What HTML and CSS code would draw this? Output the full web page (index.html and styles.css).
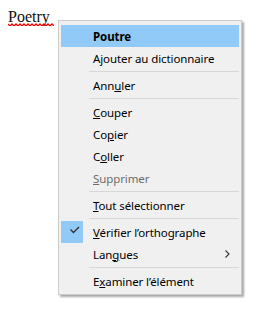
FILE: index.html
```html
<!DOCTYPE html>
<html>
<head>
<meta charset="utf-8">
<link rel="stylesheet" href="styles.css">
</head>
<body>
<span class="word">Poetry<svg class="squiggle" width="46" height="4" viewBox="0 0 46 4"><polyline points="0,1 2,3 4,1 6,3 8,1 10,3 12,1 14,3 16,1 18,3 20,1 22,3 24,1 26,3 28,1 30,3 32,1 34,3 36,1 38,3 40,1 42,3 44,1 46,3" fill="none" stroke="#ff0000" stroke-width="1.3"/></svg></span>
<div class="menu">
  <div class="item hl"><span class="chk"></span><span class="label bold">Poutre</span></div>
  <div class="item"><span class="chk"></span><span class="label">Ajouter au dictionnaire</span></div>
  <div class="sep"></div>
  <div class="item"><span class="chk"></span><span class="label">Ann<u>u</u>ler</span></div>
  <div class="sep"></div>
  <div class="item"><span class="chk"></span><span class="label"><u>C</u>ouper</span></div>
  <div class="item"><span class="chk"></span><span class="label">Co<u>p</u>ier</span></div>
  <div class="item"><span class="chk"></span><span class="label">C<u>o</u>ller</span></div>
  <div class="item disabled"><span class="chk"></span><span class="label"><u>S</u>upprimer</span></div>
  <div class="sep"></div>
  <div class="item"><span class="chk"></span><span class="label"><u>T</u>out sélectionner</span></div>
  <div class="sep"></div>
  <div class="item"><span class="chk on"><svg width="22" height="22" viewBox="0 0 22 22"><path d="M9.5 8.5 L12.5 11.5 L18 6" fill="none" stroke="#333" stroke-width="1.4"/></svg></span><span class="label"><u>V</u>érifier l’orthographe</span></div>
  <div class="item"><span class="chk"></span><span class="label">Lan<u>g</u>ues</span><svg class="arrow" width="5" height="8" viewBox="0 0 5 8"><path d="M0.5 0.5 L4 4 L0.5 7.5" fill="none" stroke="#333" stroke-width="1.1"/></svg></div>
  <div class="sep"></div>
  <div class="item"><span class="chk"></span><span class="label">E<u>x</u>aminer l’élément</span></div>
</div>
</body>
</html>
```

FILE: styles.css
```css
body {
  margin: 8px;
  font-family: "Liberation Serif", serif;
  font-size: 16px;
  background: #fff;
}
.word {
  position: relative;
  color: #111;
}
.squiggle {
  position: absolute;
  left: 0;
  top: 15px;
  display: block;
}
.menu {
  position: absolute;
  left: 58px;
  top: 20px;
  width: 178px;
  padding: 4px 2px 2px 2px;
  background: #f0f0f0;
  border: 1px solid #cccccc;
  box-shadow: 2px 2px 2px rgba(0, 0, 0, 0.35);
  font-family: "Noto Sans", sans-serif;
  font-size: 11.5px;
  letter-spacing: -0.1px;
  color: #000;
}
.item {
  height: 22px;
  display: flex;
  align-items: center;
}
.item.hl {
  background: #91c9f7;
}
.chk {
  width: 22px;
  height: 22px;
  flex: none;
  margin-right: 10px;
}
.chk.on {
  background: #91c9f7;
}
.chk svg {
  display: block;
}
.label {
  flex: 1;
  white-space: nowrap;
}
.bold {
  font-weight: bold;
}
.disabled {
  color: #6d6d6d;
}
.arrow {
  margin-right: 9px;
  flex: none;
}
.sep {
  height: 5px;
  display: flex;
  align-items: center;
  padding-left: 28px;
}
.sep::after {
  content: "";
  display: block;
  height: 1px;
  width: 100%;
  background: #d7d7d7;
}
```
